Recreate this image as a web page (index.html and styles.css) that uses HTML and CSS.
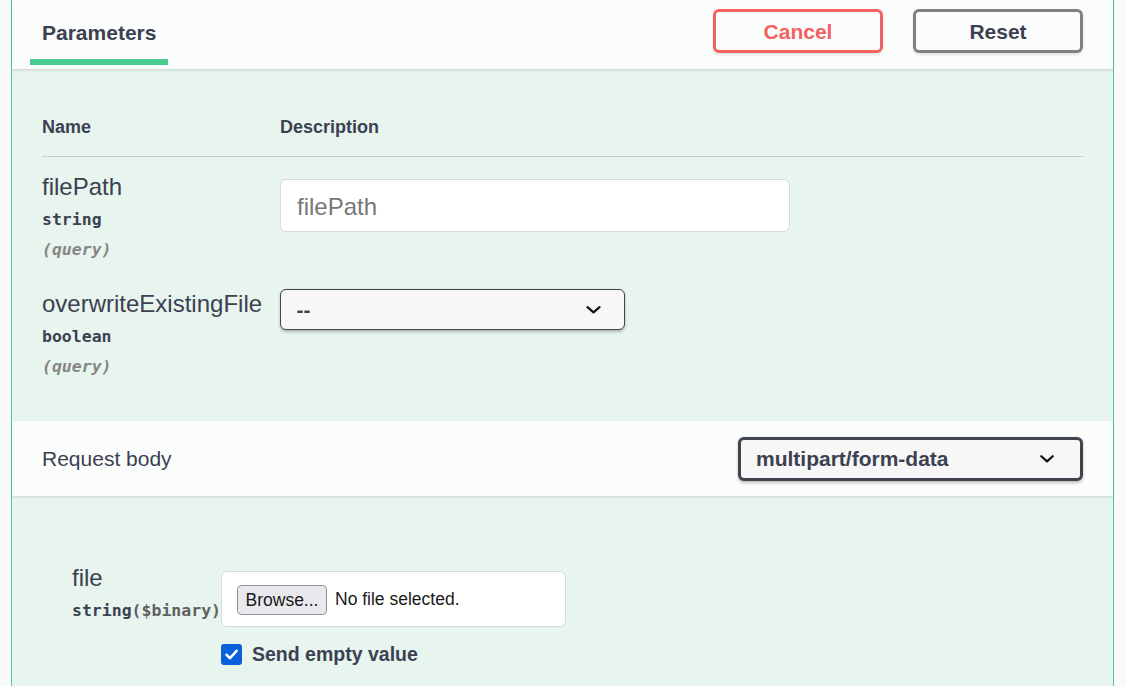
FILE: index.html
```html
<!DOCTYPE html>
<html lang="en">
<head>
<meta charset="utf-8">
<title>Parameters</title>
<link rel="stylesheet" href="styles.css">
</head>
<body>
<div class="opblock">
  <div class="section-header tabs-header">
    <div class="tab">Parameters</div>
    <div class="actions">
      <button class="btn btn-cancel">Cancel</button>
      <button class="btn btn-reset">Reset</button>
    </div>
  </div>

  <div class="params">
    <div class="param-head">
      <div>Name</div>
      <div>Description</div>
    </div>
    <div class="param-row">
      <div class="param-name-col">
        <div class="param-name">filePath</div>
        <div class="param-type">string</div>
        <div class="param-in">(query)</div>
      </div>
      <div class="param-desc-col">
        <input class="text-input" type="text" placeholder="filePath">
      </div>
    </div>
    <div class="param-row">
      <div class="param-name-col">
        <div class="param-name">overwriteExistingFile</div>
        <div class="param-type">boolean</div>
        <div class="param-in">(query)</div>
      </div>
      <div class="param-desc-col">
        <div class="select select-thin">
          <span>--</span>
          <svg class="chevron" width="15" height="8" viewBox="0 0 15 8"><path d="M1.5 1.2 L7.5 6.4 L13.5 1.2" fill="none" stroke="#111" stroke-width="2.2" stroke-linecap="round" stroke-linejoin="round"/></svg>
        </div>
      </div>
    </div>
  </div>

  <div class="section-header body-header">
    <h4 class="body-title">Request body</h4>
    <div class="select select-wide">
      <span>multipart/form-data</span>
      <svg class="chevron" width="14" height="8" viewBox="0 0 14 8"><path d="M1.3 1.2 L7 6.4 L12.7 1.2" fill="none" stroke="#111" stroke-width="2.2" stroke-linecap="round" stroke-linejoin="round"/></svg>
    </div>
  </div>

  <div class="rb-body">
    <div class="file-row">
      <div class="file-name-col">
        <div class="param-name">file</div>
        <div class="param-type">string<span class="fmt">($binary)</span></div>
      </div>
      <div class="file-desc-col">
        <div class="file-box">
          <span class="browse">Browse...</span>
          <span class="no-file">No file selected.</span>
        </div>
        <div class="empty-value">
          <span class="checkbox"><svg width="21" height="21" viewBox="0 0 21 21"><path d="M5.5 10.8 L9 14.2 L15.6 6.8" fill="none" stroke="#fff" stroke-width="2.6" stroke-linecap="round" stroke-linejoin="round"/></svg></span>
          <span>Send empty value</span>
        </div>
      </div>
    </div>
  </div>
</div>
</body>
</html>
```

FILE: styles.css
```css
* { box-sizing: border-box; }

body {
  margin: 0;
  background: #fafafa;
  font-family: "Liberation Sans", Arial, sans-serif;
  color: #3b4151;
  overflow: hidden;
}

.opblock {
  margin-left: 11px;
  width: 1103px;
  height: 686px;
  background: #e8f4ee;
  border-left: 1px solid #49cc90;
  border-right: 1px solid #49cc90;
}

.section-header {
  display: flex;
  justify-content: space-between;
  background: rgba(255, 255, 255, 0.8);
  box-shadow: 0 1.5px 3px rgba(0, 0, 0, 0.1);
}

.tabs-header {
  height: 69px;
  align-items: flex-start;
  padding: 0 30px 0 18px;
}

.tab {
  margin-top: 21px;
  padding: 0 12px 14px;
  border-bottom: 6px solid #49cc90;
  font-size: 21px;
  line-height: 24px;
  font-weight: 700;
}

.actions {
  display: flex;
  gap: 30px;
  margin-top: 9px;
}

.btn {
  width: 170px;
  height: 44px;
  border: 3px solid #808080;
  border-radius: 6px;
  background: transparent;
  box-shadow: 0 1.5px 3px rgba(0, 0, 0, 0.1);
  font-family: "Liberation Sans", Arial, sans-serif;
  font-size: 21px;
  font-weight: 700;
  color: #3b4151;
  padding: 2px 0 0;
}

.btn-cancel {
  border-color: #f26262;
  color: #f26262;
}

.params {
  padding: 30px 30px 30px;
}

.param-head {
  display: grid;
  grid-template-columns: 238px 1fr;
  padding: 18px 0 18px;
  font-size: 18px;
  line-height: 21px;
  font-weight: 700;
  border-bottom: 1px solid rgba(59, 65, 81, 0.2);
}

.param-row {
  display: grid;
  grid-template-columns: 238px 1fr;
  padding: 15px 0 14px;
}

.param-name {
  padding-top: 1px;
  font-size: 24px;
  line-height: 28px;
}

.param-type {
  padding: 7.5px 0;
  font-family: "DejaVu Sans Mono", monospace;
  font-size: 16.5px;
  line-height: 21px;
  font-weight: 700;
}

.param-type .fmt {
  color: #606060;
}

.param-in {
  padding-top: 2px;
  font-family: "DejaVu Sans Mono", monospace;
  font-size: 16.5px;
  line-height: 21px;
  font-weight: 700;
  font-style: italic;
  color: #868686;
}

.text-input {
  display: block;
  margin-top: 7px;
  width: 510px;
  height: 53px;
  border: 1px solid #d9d9d9;
  border-radius: 6px;
  background: #fff;
  padding: 2px 16px 0;
  font-family: "Liberation Sans", Arial, sans-serif;
  font-size: 24px;
  color: #3b4151;
  outline: none;
}

.text-input::placeholder {
  color: #777;
}

.select {
  display: flex;
  align-items: center;
  justify-content: space-between;
  width: 345px;
  background: #f7f7f7;
  border: 1.5px solid #41444e;
  border-radius: 6px;
  box-shadow: 0 1.5px 3px rgba(0, 0, 0, 0.25);
  font-size: 21px;
  font-weight: 700;
  color: #3b4151;
}

.select-thin {
  height: 41px;
  padding: 0 23px 0 15.5px;
}

.select-wide {
  height: 44px;
  border-width: 3px;
  padding: 0 26px 0 15px;
}

.chevron {
  display: block;
}

.body-header {
  height: 75px;
  align-items: center;
  padding: 0 30px;
}

.body-title {
  margin: 0;
  font-size: 21px;
  font-weight: 400;
}

.rb-body {
  padding: 67px 0 0 60px;
}

.file-row {
  display: flex;
}

.file-name-col {
  width: 149px;
}

.file-box {
  display: flex;
  align-items: center;
  gap: 8px;
  margin-top: 8px;
  width: 345px;
  height: 56px;
  background: #fff;
  border: 1px solid #d9d9d9;
  border-radius: 6px;
  padding: 1px 15px 0;
  font-size: 17.5px;
  color: #1a1a1a;
}

.browse {
  display: flex;
  align-items: center;
  justify-content: center;
  width: 90px;
  height: 30px;
  padding-top: 2px;
  background: #e9e9ed;
  border: 1px solid #8f8f9d;
  border-radius: 4.5px;
}

.empty-value {
  display: flex;
  align-items: center;
  gap: 10px;
  margin-top: 16px;
  font-size: 19.5px;
  font-weight: 700;
}

.checkbox {
  display: block;
  width: 21px;
  height: 21px;
  background: #0a60dc;
  border-radius: 3px;
}

.checkbox svg {
  display: block;
}
```
